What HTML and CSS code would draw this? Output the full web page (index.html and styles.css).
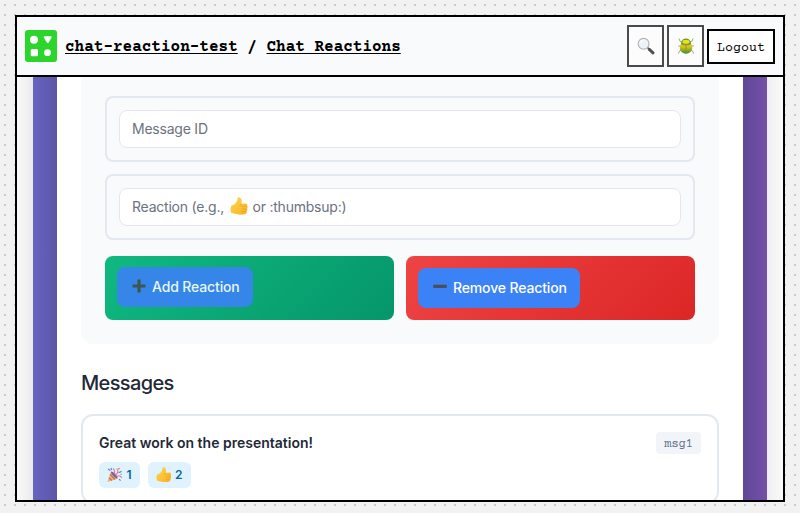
FILE: index.html
```html
<!DOCTYPE html>
<html lang="en">
<head>
<meta charset="utf-8">
<title>Chat Reactions</title>
<link rel="stylesheet" href="styles.css">
</head>
<body>
<svg class="defs" width="0" height="0">
  <defs>
    <linearGradient id="skin" x1="0" y1="0" x2="1" y2="1"><stop offset="0" stop-color="#ffd94a"/><stop offset="1" stop-color="#f9ae25"/></linearGradient>
    <linearGradient id="shell" x1="0" y1="0" x2="0" y2="1"><stop offset="0" stop-color="#efd51c"/><stop offset=".45" stop-color="#d0c01d"/><stop offset="1" stop-color="#3e8b32"/></linearGradient>
    <symbol id="thumb" viewBox="0 0 18 18">
      <path d="M1.500 8.400Q4 8.200 5.700 6Q7.700 3.600 7.700 1Q8.200 -.3 9.800 .4Q12.400 2 11.400 6.700L16 6.500Q17.700 6.900 17.200 8.700Q18 10 17.200 11.500Q17.700 13 16.700 14.400Q16.900 16 15.500 16.900Q11 18.400 7 17.100Q3 16.700 1.200 15.700Q-.5 12 1.500 8.400Z" fill="url(#skin)"/>
      <path d="M11.400 6.700Q9.600 8 10 9.500M11.700 9.300H16.900M11.500 12H16.700M11.500 14.700H16.200" fill="none" stroke="#e39b20" stroke-width=".6"/>
    </symbol>
  </defs>
</svg>
<div class="window">
  <header class="topbar">
    <svg class="logo" viewBox="0 0 32 32"><rect width="32" height="32" rx="3" fill="#2bd52b"/><g fill="#fff"><circle cx="9" cy="9.700" r="4"/><path d="M19.500 6.200H25.800Q27.200 6.300 26.500 7.700L23.700 12.400Q22.700 13.500 21.800 12.400L18.900 7.700Q18.200 6.300 19.500 6.200Z"/><rect x="5.700" y="19" width="7.300" height="7.200" rx="1.500"/><circle cx="22.500" cy="22.700" r="3.400"/></g></svg>
    <div class="crumbs"><a>chat-reaction-test</a> / <a>Chat Reactions</a></div>
    <div class="tools">
      <button class="tool" aria-label="Search"><svg width="18" height="18" viewBox="0 0 18 18"><path d="M10.500 10.500L12.500 12.500" stroke="#8a8a8a" stroke-width="1.800"/><path d="M12.300 12.300L16 15.800" stroke="#505050" stroke-width="3" stroke-linecap="round"/><circle cx="6.600" cy="6.800" r="5.400" fill="#eef3f7" stroke="#adb1b6" stroke-width="1.100"/><path d="M3.500 6Q4 3.500 6.500 3.200" stroke="#fff" fill="none"/></svg></button>
      <button class="tool" aria-label="Debug"><svg width="18" height="18" viewBox="0 0 18 18"><path d="M5 5L3 4.200L2 1.500M13 5L15 4.200L16 1.500M4 9H1.200M14 9H16.800M5 13L2.500 14L1.500 16.500M13 13L15.500 14L16.500 16.500" fill="none" stroke="#8fa07c" stroke-width=".9"/><ellipse cx="9" cy="10.800" rx="6.300" ry="6" fill="url(#shell)"/><path d="M3.800 6.500Q5 1.500 9 1.500Q13 1.500 14.200 6.500Q9 9 3.800 6.500Z" fill="#5c9c2c"/><ellipse cx="9" cy="4.800" rx="3.600" ry="2" fill="#f3dd1f"/><path d="M9 7.500V16.500M3.800 7.200Q9 9 14.200 7.200" fill="none" stroke="#80862a" stroke-width=".6"/></svg></button>
      <button class="logout">Logout</button>
    </div>
  </header>
  <main class="viewport">
    <div class="stage">
      <div class="card">
        <section class="panel">
          <div class="field"><div class="input">Message ID</div></div>
          <div class="field"><div class="input"><span>Reaction (e.g., </span><svg class="thumb-lg"><use href="#thumb"/></svg><span> or :thumbsup:)</span></div></div>
          <div class="actions">
            <div class="action add"><button class="btn hover"><svg width="14" height="14" viewBox="0 0 14 14"><path d="M7 .5V13.500M.5 7H13.500" stroke="#444c50" stroke-width="3.200"/></svg><span>Add Reaction</span></button></div>
            <div class="action remove"><button class="btn"><svg width="14" height="14" viewBox="0 0 14 14"><path d="M.3 6.300H13.700" stroke="#4a4d55" stroke-width="3.200"/></svg><span>Remove Reaction</span></button></div>
          </div>
        </section>
        <h2>Messages</h2>
        <article class="message">
          <div class="message-head"><strong>Great work on the presentation!</strong><code>msg1</code></div>
          <div class="reactions">
            <span class="reaction"><svg viewBox="0 0 16 16"><path d="M.4 15.500L4 4.500Q9.500 6.500 11 12Z" fill="#f5bd3c"/><path d="M3.300 7.500L8 12.900M2 11L5 14" stroke="#b36bb5" stroke-width="1.300"/><ellipse cx="7.500" cy="8.300" rx="1.400" ry="4.600" transform="rotate(-43 7.500 8.300)" fill="#84609b"/><path d="M7.500 7Q8.500 4 6.500 1.500M8.500 8Q12 6 11 3.500Q10.500 2 13.500 1.500M10 9.500Q13 8 15.500 11" fill="none" stroke="#d97b91" stroke-width="1.100"/><path d="M1 2L3.500 3.500M4 1L5 3M12 6L15 4.500M12.500 12.500L14 14" stroke="#5d83dc" stroke-width="1.200"/><circle cx="10" cy="2" r=".7" fill="#e7b43f"/><circle cx="14.500" cy="7.500" r=".7" fill="#63b477"/></svg><span>1</span></span>
            <span class="reaction"><svg viewBox="0 0 18 18"><use href="#thumb"/></svg><span>2</span></span>
          </div>
        </article>
      </div>
    </div>
  </main>
</div>
</body>
</html>
```
FILE: styles.css
```css
* { box-sizing: border-box; }
body {
  margin: 0;
  height: 513px;
  padding: 15px 15px 11px;
  overflow: hidden;
  background: #f2f2f2 conic-gradient(from 270deg at 2px 2px, #cbcbcb 90deg, transparent 0) 4px 4px / 10px 10px;
  font-family: Inter, sans-serif;
  color: #1f2937;
}
button { font: inherit; }
.defs { position: absolute; }
.window { height: 487px; border: 2px solid #000; background: #fff; display: flex; flex-direction: column; overflow: hidden; }
.topbar { flex: 0 0 60px; border-bottom: 2px solid #000; background: #f9fafc; display: flex; align-items: center; padding: 0 8px; }
.logo { width: 32px; height: 32px; margin-right: 8px; }
.crumbs { padding-top: 2px; font: bold 16px/24px "Courier Prime", "Courier New", "Liberation Mono", monospace; color: #000; white-space: pre; }
.crumbs a { text-decoration: underline; text-decoration-thickness: 1px; text-underline-offset: 2px; }
.tools { margin-left: auto; display: flex; align-items: center; gap: 3px; }
.tool { width: 37px; height: 42px; border: 2px solid #4a4a4a; background: #fcfcfc; padding: 0; display: flex; align-items: center; justify-content: center; }
.logout { width: 68px; height: 35px; border: 2px solid #000; background: #fff; padding: 4px 0 0; font: 13.333px "Courier Prime", "Courier New", "Liberation Mono", monospace; color: #000; }
.viewport { flex: 1; min-height: 0; padding: 0 16px; overflow: hidden; background: linear-gradient(90deg, #fafafa, #eaeaea 16px, #efefef 750px, #fafafa); }
.stage { height: 423px; padding: 0 24px; background: linear-gradient(90deg, #6664c2, #5d55a6 24px, #604796 710px, #7351aa); }
.card { height: 423px; padding: 0 24px; background: #fff; }
.panel { height: 267px; padding: 19px 24px 24px; border-radius: 0 0 12px 12px; background: #f8fafc; }
.field { height: 66px; margin-bottom: 12px; padding: 12px; border: 2px solid #e2e8f0; border-radius: 8px; }
.input { height: 38px; border: 1px solid #e5e7eb; border-radius: 8px; background: #fff; padding: 0 12px 2px; display: flex; align-items: center; font-size: 14px; letter-spacing: -.22px; color: #6b7280; white-space: pre; }
.thumb-lg { width: 18px; height: 18px; margin: 0 1px 0 2px; }
.actions { display: grid; grid-template-columns: 1fr 1fr; gap: 12px; margin-top: 16px; }
.action { height: 64px; padding: 12px; border-radius: 8px; }
.add { background: linear-gradient(135deg, #10b981, #059669); }
.remove { background: linear-gradient(135deg, #ef4444, #dc2626); }
.btn { height: 40px; border: 0; border-radius: 8px; background: #3b82f6; color: #fff; padding: 0 13.5px 2px 15px; display: flex; align-items: center; gap: 6px; font-size: 14px; font-weight: 500; letter-spacing: -.14px; white-space: nowrap; }
.hover { opacity: .9; transform: translateY(-1px); }
h2 { margin: 24px 0 16px; font-size: 20px; line-height: 30px; font-weight: 550; letter-spacing: -.65px; }
.message { height: 90px; border: 2px solid #e2e8f0; border-radius: 12px; padding: 16px; }
.message-head { height: 22px; display: flex; align-items: center; justify-content: space-between; }
.message-head strong { padding-bottom: 2px; font-size: 14px; font-weight: 600; }
.message code { height: 22px; padding: 2px 8px 0; border-radius: 4px; background: #f1f5f9; color: #64748b; font: 12px/22px "Courier Prime", "Courier New", "Liberation Mono", monospace; }
.reactions { display: flex; gap: 8px; margin-top: 8px; }
.reaction { height: 26px; padding: 0 8px 1px; border-radius: 6px; background: #e0f2fe; color: #0369a1; display: flex; align-items: center; gap: 4px; font-size: 12px; font-weight: 600; }
.reaction svg { width: 15.5px; height: 15.5px; }
```
